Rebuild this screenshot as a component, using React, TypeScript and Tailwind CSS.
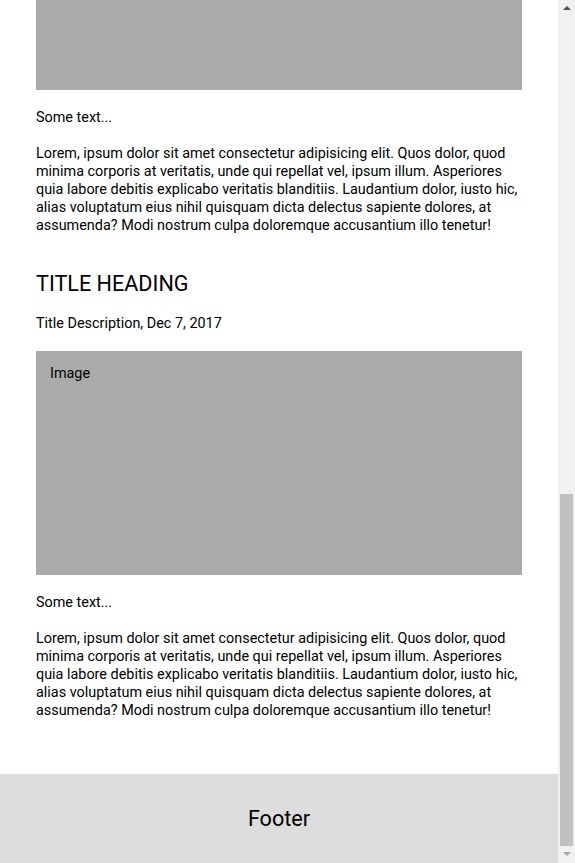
const lorem =
  'Lorem, ipsum dolor sit amet consectetur adipisicing elit. Quos dolor, quod minima corporis at veritatis, unde qui repellat vel, ipsum illum. Asperiores quia labore debitis explicabo veritatis blanditiis. Laudantium dolor, iusto hic, alias voluptatum eius nihil quisquam dicta delectus sapiente dolores, at assumenda? Modi nostrum culpa doloremque accusantium illo tenetur!';

function Card() {
  return (
    <div className="pt-[36px]">
      <h2 className="text-[21.6px] leading-[26px] font-normal">TITLE HEADING</h2>
      <p className="mt-[18px]">Title Description, Dec 7, 2017</p>
      <div className="mt-[18px] h-[224px] bg-[#aaaaaa] px-[14px] py-[14px]">Image</div>
      <p className="mt-[19px]">Some text...</p>
      <p className="mt-[18px]">{lorem}</p>
    </div>
  );
}

// the page is shown scrolled to its end, so the scrollbar is drawn by hand
function Scrollbar() {
  return (
    <div className="flex w-[17px] shrink-0 flex-col bg-[#f1f1f1]">
      <div className="flex h-[17px] items-center justify-center">
        <svg width="8" height="5" viewBox="0 0 8 5">
          <path d="M0 4h8L4 0z" fill="#505050" />
        </svg>
      </div>
      <div className="flex-1" />
      <div className="mx-[2px] h-[352px] bg-[#c1c1c1]" />
      <div className="flex h-[17px] items-center justify-center">
        <svg width="8" height="5" viewBox="0 0 8 5">
          <path d="M0 0h8L4 4z" fill="#a3a3a3" />
        </svg>
      </div>
    </div>
  );
}

function App() {
  return (
    <div className="flex h-screen overflow-hidden bg-white text-black text-[14.4px] leading-[18px] font-['Roboto',sans-serif]">
      <div className="flex min-w-0 flex-1 flex-col justify-end overflow-hidden">
        <div className="shrink-0">
          <header className="h-[740px] bg-[#f1f1f1] px-[36px] pt-[40px] text-center">
            <h1 className="text-[40px] leading-[48px]">Blog Name</h1>
          </header>
          <main className="px-[36px]">
            <Card />
            <Card />
          </main>
          <footer className="mt-[54px] flex h-[89px] items-center justify-center bg-[#dddddd]">
            <h2 className="text-[21.6px] leading-[26px]">Footer</h2>
          </footer>
        </div>
      </div>
      <Scrollbar />
    </div>
  );
}

export default App;
